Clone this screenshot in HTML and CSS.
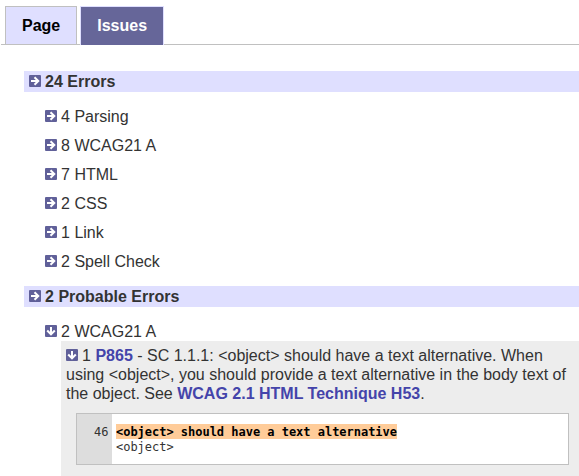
FILE: index.html
```html
<!DOCTYPE html>
<html lang="en">
<head>
<meta charset="utf-8">
<title>Issues</title>
<link rel="stylesheet" href="styles.css">
</head>
<body>
<svg width="0" height="0" class="defs">
  <symbol id="right" viewBox="0 0 12 12">
    <rect width="12" height="12" rx="1" fill="#606099"/>
    <path d="M2 6H9.5M5.5 2.2L9.3 6L5.5 9.8" fill="none" stroke="#fff" stroke-width="2"/>
  </symbol>
  <symbol id="down" viewBox="0 0 12 12">
    <rect width="12" height="12" rx="1" fill="#606099"/>
    <path d="M6 2V9.5M2.2 5.5L6 9.3L9.8 5.5" fill="none" stroke="#fff" stroke-width="2"/>
  </symbol>
</svg>
<nav class="tabs">
  <a class="tab">Page</a>
  <a class="tab active">Issues</a>
</nav>
<main class="issues">
  <h2 class="group"><svg class="icon"><use href="#right"/></svg> 24 Errors</h2>
  <ul class="list">
    <li><svg class="icon"><use href="#right"/></svg> 4 Parsing</li>
    <li><svg class="icon"><use href="#right"/></svg> 8 WCAG21 A</li>
    <li><svg class="icon"><use href="#right"/></svg> 7 HTML</li>
    <li><svg class="icon"><use href="#right"/></svg> 2 CSS</li>
    <li><svg class="icon"><use href="#right"/></svg> 1 Link</li>
    <li><svg class="icon"><use href="#right"/></svg> 2 Spell Check</li>
  </ul>
  <h2 class="group"><svg class="icon"><use href="#right"/></svg> 2 Probable Errors</h2>
  <ul class="list last">
    <li class="open"><svg class="icon"><use href="#down"/></svg> 2 WCAG21 A
      <div class="detail">
        <p><svg class="icon"><use href="#down"/></svg> 1 <a>P865</a> - SC 1.1.1: &lt;object&gt; should have a text alternative. When using &lt;object&gt;, you should provide a text alternative in the body text of the object. See <a>WCAG 2.1 HTML Technique H53</a>.</p>
        <div class="code">
          <div class="line-no">46</div>
          <div class="source"><mark>&lt;object&gt; should have a text alternative</mark><br>&lt;object&gt;</div>
        </div>
      </div>
    </li>
  </ul>
</main>
</body>
</html>
```
FILE: styles.css
```css
* { box-sizing: border-box; }
body {
  margin: 0;
  background: #fff;
  color: #333;
  font: 16px/19px "Liberation Sans", Arial, sans-serif;
}
.defs { display: block; }
.tabs {
  display: flex;
  gap: 3px;
  height: 45px;
  margin-left: 1px;
  padding: 6px 0 0 4px;
  border-bottom: 1px solid #c0c0c0;
}
.tab {
  height: 38px;
  padding: 9px 16px 0;
  border: 1px solid #c0c0c0;
  border-bottom: 0;
  background: #dfdfff;
  color: #000;
  font-weight: bold;
}
.tab.active {
  height: 39px;
  border-color: #dfdfff;
  background: #669;
  color: #fff;
}
.issues { padding: 26px 0 0 24px; }
.group {
  height: 21px;
  margin: 0;
  padding: 1px 5px;
  background: #dfdfff;
  font-size: 16px;
  line-height: 19px;
}
.icon {
  width: 12px;
  height: 12px;
  margin-right: -0.4px;
  vertical-align: 0;
}
.list {
  margin: 0;
  padding: 10px 0 10px 21px;
  list-style: none;
}
.list.last { padding-bottom: 0; }
.list li { padding: 5px 0; }
.list .open { padding-bottom: 0; }
.detail {
  height: 135px;
  margin-left: 16px;
  padding: 5px;
  background: #ededed;
}
.detail p { margin: 0; }
.detail a { color: #44a; font-weight: bold; }
.code {
  display: flex;
  height: 52px;
  margin: 10px 5px 0 10px;
  border: 1px solid #c0c0c0;
  background: #fff;
  font: 12px/15px "DejaVu Sans Mono", monospace;
}
.line-no {
  width: 35px;
  padding: 11px 3.5px 0 0;
  background: #ddd;
  text-align: right;
}
.source {
  padding: 11px 4px 0;
  letter-spacing: -0.02px;
}
.source mark {
  padding-top: 1px;
  background: #fc9;
  color: #000;
  font-weight: bold;
}
```
